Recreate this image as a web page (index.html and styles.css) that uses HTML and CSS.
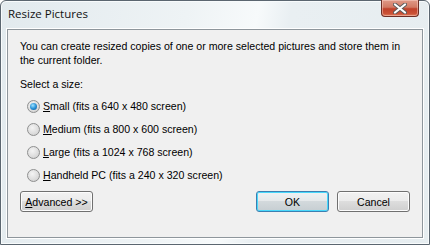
FILE: index.html
```html
<!DOCTYPE html>
<html>
<head>
<meta charset="utf-8">
<link rel="stylesheet" href="styles.css">
</head>
<body>
<div class="window">
  <div class="titlebar">
    <span class="title">Resize Pictures</span>
    <button class="close" aria-label="Close">
      <svg width="14" height="11" viewBox="0 0 14 11">
        <path d="M2 1.5 L12 9.5 M12 1.5 L2 9.5" stroke="#5a5a5a" stroke-width="4" stroke-linecap="round"/>
        <path d="M2 1.5 L12 9.5 M12 1.5 L2 9.5" stroke="#ffffff" stroke-width="2.2" stroke-linecap="round"/>
      </svg>
    </button>
  </div>
  <div class="panel">
    <p class="intro">You can create resized copies of one or more selected pictures and store them in the current folder.</p>
    <p class="label">Select a size:</p>
    <div class="options">
      <label class="option"><span class="radio checked"></span><span><u>S</u>mall (fits a 640 x 480 screen)</span></label>
      <label class="option"><span class="radio"></span><span><u>M</u>edium (fits a 800 x 600 screen)</span></label>
      <label class="option"><span class="radio"></span><span><u>L</u>arge (fits a 1024 x 768 screen)</span></label>
      <label class="option"><span class="radio"></span><span><u>H</u>andheld PC (fits a 240 x 320 screen)</span></label>
    </div>
    <div class="buttons">
      <button class="btn"><u>A</u>dvanced &gt;&gt;</button>
      <div class="right">
        <button class="btn default">OK</button>
        <button class="btn">Cancel</button>
      </div>
    </div>
  </div>
</div>
</body>
</html>
```
FILE: styles.css
```css
* { box-sizing: border-box; }
html, body { margin: 0; padding: 0; }
body {
  width: 430px;
  height: 245px;
  background: #ffffff;
  font-family: "Liberation Sans", Tahoma, sans-serif;
  font-size: 10.6px;
  color: #000;
}
.window {
  width: 430px;
  height: 245px;
  border: 1px solid #5b6670;
  border-radius: 6px 6px 0 0;
  background: linear-gradient(100deg, #e2eaee 0%, #eef3f5 40%, #f7fafb 55%, #e9eff2 62%, #e6edf0 100%);
  display: flex;
  flex-direction: column;
  padding: 0 6px 6px 6px;
  box-shadow: inset 0 0 0 1px #f8fbfc;
}
.titlebar {
  height: 28px;
  display: flex;
  align-items: flex-start;
  justify-content: space-between;
}
.title {
  font-family: "Open Sans", "Liberation Sans", sans-serif;
  font-size: 11.5px;
  color: #111;
  padding-top: 5px;
  padding-left: 1px;
}
.close {
  width: 38px;
  height: 17px;
  margin-top: -1px;
  margin-right: 4px;
  border: 1px solid #6d2e25;
  border-top: none;
  border-radius: 0 0 4px 4px;
  background: linear-gradient(to bottom, #e09a88 0%, #d27a64 45%, #c0412a 55%, #cb5236 85%, #de7f60 100%);
  box-shadow: inset 0 0 0 1px rgba(255,220,210,0.45);
  padding: 0;
  display: flex;
  align-items: center;
  justify-content: center;
}
.panel {
  flex: 1;
  background: #f0f0f0;
  border: 1px solid #8e969c;
  box-shadow: 0 0 0 1px #ffffff;
  padding: 9px 12px 0 12px;
  display: flex;
  flex-direction: column;
}
.intro {
  margin: 0;
  line-height: 14px;
  width: 395px;
}
.label {
  margin: 10px 0 0 0;
  line-height: 14px;
}
.options {
  display: flex;
  flex-direction: column;
  gap: 9px;
  margin-top: 8px;
  padding-left: 7px;
}
.option {
  display: flex;
  align-items: center;
  gap: 3px;
  height: 14px;
  line-height: 14px;
}
.radio {
  width: 13px;
  height: 13px;
  border-radius: 50%;
  border: 1px solid #8e8f8f;
  background: radial-gradient(circle at 40% 35%, #f4f4f4 0%, #dcdcdc 60%, #c8c8c8 100%);
  display: flex;
  align-items: center;
  justify-content: center;
  flex: none;
}
.radio.checked::after {
  content: "";
  width: 7px;
  height: 7px;
  border-radius: 50%;
  background: radial-gradient(circle at 40% 35%, #9fe3ff 0%, #2a93d8 50%, #0b4f8d 100%);
}
.buttons {
  margin-top: 9px;
  display: flex;
  justify-content: space-between;
  align-items: center;
}
.right {
  display: flex;
  gap: 8px;
}
.btn {
  font-family: inherit;
  font-size: 10.6px;
  color: #000;
  width: 73px;
  height: 21px;
  padding: 0;
  border: 1px solid #707070;
  border-radius: 3px;
  background: linear-gradient(to bottom, #f2f2f2 0%, #ebebeb 49%, #dddddd 50%, #cfcfcf 100%);
  box-shadow: inset 0 0 0 1px #fcfcfc;
}
.btn.default {
  border-color: #3c7fb1;
  box-shadow: inset 0 0 0 1px #48d8fb;
  background: linear-gradient(to bottom, #f0f2f3 0%, #e4e8ea 49%, #d3d9dc 50%, #c6ced2 100%);
}
```
